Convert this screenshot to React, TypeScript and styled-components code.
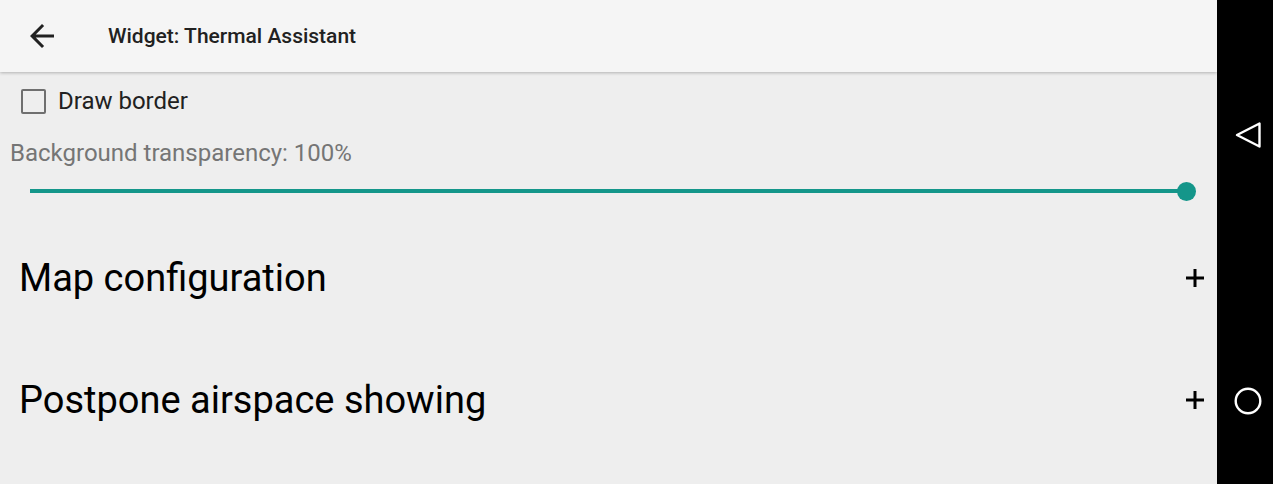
import React from "react";
import styled, { createGlobalStyle } from "styled-components";

const GlobalStyle = createGlobalStyle`
  html, body {
    margin: 0;
    padding: 0;
    background: #000;
    font-family: Roboto, "Noto Sans", "Liberation Sans", sans-serif;
  }
`;

const Screen = styled.div`
  width: 1273px;
  height: 484px;
  display: flex;
  overflow: hidden;
`;

const Main = styled.div`
  width: 1217px;
  display: flex;
  flex-direction: column;
  background: #eeeeee;
`;

const Toolbar = styled.header`
  height: 72px;
  flex-shrink: 0;
  display: flex;
  align-items: center;
  background: #f5f5f5;
  box-shadow: 0 1px 3px rgba(0, 0, 0, 0.25);
  position: relative;
  z-index: 1;
`;

const BackButton = styled.button`
  width: 56px;
  height: 56px;
  margin-left: 14px;
  border: none;
  background: none;
  padding: 0;
  display: flex;
  align-items: center;
  justify-content: center;
`;

const Title = styled.h1`
  margin: 0 0 0 38px;
  font-size: 21px;
  font-weight: 500;
  color: #212121;
`;

const Content = styled.div`
  display: flex;
  flex-direction: column;
`;

const CheckRow = styled.label`
  display: flex;
  align-items: center;
  height: 58px;
  padding-left: 21px;
  gap: 12px;
  font-size: 24px;
  color: #212121;
`;

const Box = styled.span`
  width: 21px;
  height: 21px;
  border: 2.5px solid #6f6f6f;
  border-radius: 2px;
`;

const SliderLabel = styled.div`
  padding-left: 10px;
  margin-top: 9px;
  font-size: 24px;
  line-height: 28px;
  color: #757575;
`;

const SliderWrap = styled.div`
  height: 48px;
  display: flex;
  align-items: center;
  padding: 0 31px 0 30px;
`;

const Track = styled.div`
  flex: 1;
  height: 4px;
  background: #14968a;
  position: relative;
`;

const Thumb = styled.span`
  position: absolute;
  right: -9.5px;
  top: 50%;
  width: 19px;
  height: 19px;
  margin-top: -9.5px;
  border-radius: 50%;
  background: #14968a;
`;

const Section = styled.div`
  height: 122px;
  display: flex;
  align-items: center;
  justify-content: space-between;
  padding: 0 12px 0 19px;
  font-size: 38px;
  color: #000;
  &:first-of-type {
    margin-top: 2px;
  }
`;

const NavBar = styled.nav`
  width: 56px;
  padding-left: 5px;
  box-sizing: border-box;
  background: #000;
  display: flex;
  flex-direction: column;
  align-items: center;
`;

const NavSlot = styled.div<{ $top: number }>`
  margin-top: ${(p) => p.$top}px;
  height: 30px;
  display: flex;
  align-items: center;
  justify-content: center;
`;

const Plus = () => (
  <svg width="20" height="20" viewBox="0 0 20 20">
    <path d="M10 1v18M1 10h18" stroke="#000" strokeWidth="3" />
  </svg>
);

export default function App() {
  const transparency = 100;
  return (
    <>
      <GlobalStyle />
      <Screen>
        <Main>
          <Toolbar>
            <BackButton>
              <svg width="36" height="36" viewBox="0 0 24 24">
                <path
                  d="M20 11H7.83l5.59-5.59L12 4l-8 8 8 8 1.41-1.41L7.83 13H20v-2z"
                  fill="#212121"
                />
              </svg>
            </BackButton>
            <Title>Widget: Thermal Assistant</Title>
          </Toolbar>
          <Content>
            <CheckRow>
              <Box />
              Draw border
            </CheckRow>
            <SliderLabel>Background transparency: {transparency}%</SliderLabel>
            <SliderWrap>
              <Track style={{ width: `${transparency}%` }}>
                <Thumb />
              </Track>
            </SliderWrap>
            <div>
              <Section>
                Map configuration
                <Plus />
              </Section>
              <Section>
                Postpone airspace showing
                <Plus />
              </Section>
            </div>
          </Content>
        </Main>
        <NavBar>
          <NavSlot $top={120}>
            <svg width="28" height="28" viewBox="0 0 28 28">
              <path d="M25.5 2.5v23L3 14z" fill="none" stroke="#fff" strokeWidth="2.4" strokeLinejoin="round" />
            </svg>
          </NavSlot>
          <NavSlot $top={236}>
            <svg width="28" height="28" viewBox="0 0 28 28">
              <circle cx="14" cy="14" r="12.3" fill="none" stroke="#fff" strokeWidth="2.4" />
            </svg>
          </NavSlot>
        </NavBar>
      </Screen>
    </>
  );
}
